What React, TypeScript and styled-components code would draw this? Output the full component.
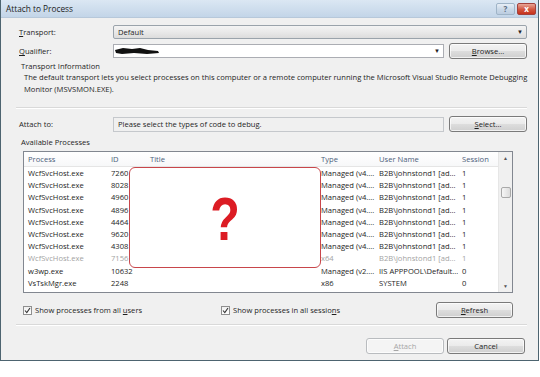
import React from "react";
import styled, { createGlobalStyle } from "styled-components";

const GlobalStyle = createGlobalStyle`
  html, body {
    margin: 0;
    padding: 0;
    background: #ffffff;
  }
  body {
    font-family: "Open Sans", "Noto Sans", sans-serif;
    font-size: 7.6px;
    color: #1e1e1e;
  }
`;

const Dialog = styled.div`
  width: 537px;
  height: 360px;
  background: #f0f0f0;
  border: 1px solid #4d6470;
  border-top: none;
  display: flex;
  flex-direction: column;
  box-sizing: content-box;
`;

const TitleBar = styled.div`
  height: 17px;
  display: flex;
  align-items: center;
  justify-content: space-between;
  padding: 0 2px 0 5px;
  background: linear-gradient(#dbe7f3, #c3d5e8);
  border-bottom: 1px solid #b7c8da;
  font-size: 8.3px;
  color: #1b1b1b;
`;

const Controls = styled.div`
  display: flex;
  gap: 2px;
  align-items: center;
`;

const CaptionButton = styled.div<{ $close?: boolean }>`
  width: 19px;
  height: 12px;
  border-radius: 2px;
  border: 1px solid ${(p) => (p.$close ? "#a3413c" : "#9fb4c7")};
  background: ${(p) =>
    p.$close
      ? "linear-gradient(#e8a597, #d2553f 55%, #c7321c)"
      : "linear-gradient(#e7eef6, #c9d8e7 55%, #bccde0)"};
  color: ${(p) => (p.$close ? "#fff" : "#5b6c80")};
  font-size: 8px;
  font-weight: bold;
  display: flex;
  align-items: center;
  justify-content: center;
  box-sizing: border-box;
`;

const Body = styled.div`
  flex: 1;
  display: flex;
  flex-direction: column;
  padding: 6px 11px 0 18px;
`;

const FieldRow = styled.div<{ $mt?: number }>`
  display: grid;
  grid-template-columns: 89px 1fr 78px;
  column-gap: 5px;
  align-items: center;
  margin-top: ${(p) => p.$mt ?? 0}px;
  height: 15px;
`;

const Label = styled.span`
  white-space: nowrap;
`;

const Select = styled.div<{ $span?: boolean }>`
  grid-column: ${(p) => (p.$span ? "2 / 4" : "2 / 3")};
  height: 14px;
  border: 1px solid #9aa3ab;
  border-radius: 2px;
  background: linear-gradient(#f4f4f4, #e9e9e9 50%, #dcdcdc);
  display: flex;
  align-items: center;
  justify-content: space-between;
  padding: 0 3px 0 4px;
  box-sizing: border-box;
`;

const Combo = styled.div`
  height: 14px;
  border: 1px solid #abadb3;
  background: #ffffff;
  display: flex;
  align-items: center;
  justify-content: space-between;
  padding: 0 3px 0 0;
  box-sizing: border-box;
`;

const TextField = styled.div`
  height: 15px;
  border: 1px solid #c5c8cc;
  background: #f0f0f0;
  display: flex;
  align-items: center;
  padding: 0 4px;
  box-sizing: border-box;
`;

const Arrow = styled.span`
  font-size: 6px;
  color: #222;
`;

const Button = styled.div<{ $disabled?: boolean; $w?: number }>`
  width: ${(p) => p.$w ?? 78}px;
  height: 16px;
  border: 1px solid ${(p) => (p.$disabled ? "#b9bcbf" : "#7a7a7a")};
  border-radius: 3px;
  background: ${(p) =>
    p.$disabled
      ? "#f4f4f4"
      : "linear-gradient(#f3f3f3, #ebebeb 48%, #dddddd 52%, #cfcfcf)"};
  color: ${(p) => (p.$disabled ? "#a6a6a6" : "#1e1e1e")};
  display: flex;
  align-items: center;
  justify-content: center;
  box-sizing: border-box;
  box-shadow: inset 0 0 0 1px rgba(255, 255, 255, 0.7);
`;

const U = styled.span`
  text-decoration: underline;
`;

const Group = styled.div`
  margin-top: 3px;
  padding-left: 2px;
  display: flex;
  flex-direction: column;
`;

const GroupText = styled.div`
  padding-left: 3px;
  line-height: 12px;
  white-space: nowrap;
`;

const Separator = styled.div<{ $mt: number }>`
  height: 0;
  border-top: 1px solid #d9d9d9;
  border-bottom: 1px solid #ffffff;
  margin-top: ${(p) => p.$mt}px;
  margin-left: -3px;
`;

const SectionLabel = styled.div`
  margin-top: 5px;
  padding-left: 2px;
  line-height: 12px;
`;

const ListBox = styled.div`
  position: relative;
  margin: 3px 14px 0 4px;
  height: 142px;
  border: 1px solid #828790;
  background: #ffffff;
  display: flex;
  overflow: hidden;
  box-sizing: border-box;
`;

const Table = styled.div`
  flex: 1;
  display: flex;
  flex-direction: column;
`;

const COLS = "83px 39px 171px 58px 83px 1fr";

const HeaderRow = styled.div`
  flex-shrink: 0;
  display: grid;
  grid-template-columns: ${COLS};
  height: 14px;
  align-items: center;
  background: linear-gradient(#ffffff, #f7f8f9);
  border-bottom: 1px solid #e5e5e5;
  color: #4c607a;
`;

const Row = styled.div<{ $dim?: boolean }>`
  flex-shrink: 0;
  display: grid;
  grid-template-columns: ${COLS};
  height: 12.2px;
  align-items: center;
  color: ${(p) => (p.$dim ? "#a3a3a3" : "#1e1e1e")};
`;

const Cell = styled.span`
  padding-left: 4px;
  white-space: nowrap;
  overflow: hidden;
`;

const ScrollBar = styled.div`
  width: 13px;
  background: #f0f0f0;
  border-left: 1px solid #e6e6e6;
  display: flex;
  flex-direction: column;
  align-items: center;
`;

const ScrollArrow = styled.span`
  font-size: 5px;
  color: #555;
  height: 12px;
  display: flex;
  align-items: center;
`;

const Track = styled.div`
  flex: 1;
  padding-top: 23px;
`;

const Thumb = styled.div`
  width: 10px;
  height: 11px;
  border: 1px solid #a9a9a9;
  border-radius: 2px;
  background: linear-gradient(90deg, #f6f6f6, #dcdcdc);
  box-sizing: border-box;
`;

const Overlay = styled.div`
  position: absolute;
  left: 105px;
  top: 15px;
  width: 192px;
  height: 101px;
  border: 1.5px solid #c8464b;
  border-radius: 6px;
  background: #ffffff;
  display: flex;
  align-items: center;
  justify-content: center;
  box-sizing: border-box;
`;

const Question = styled.span`
  font-family: "Liberation Sans", Arial, sans-serif;
  font-weight: bold;
  font-size: 62px;
  color: #dc1c24;
  transform: scaleX(0.78);
  line-height: 1;
  margin-top: 2px;
`;

const OptionsRow = styled.div`
  display: flex;
  align-items: center;
  margin: 9px 14px 0 4px;
  height: 16px;
`;

const Check = styled.label<{ $w?: number }>`
  display: flex;
  align-items: center;
  gap: 3px;
  width: ${(p) => p.$w ?? 198}px;
`;

const Box = styled.span`
  width: 9px;
  height: 9px;
  border: 1px solid #8f8f8f;
  background: linear-gradient(#f0f0f0, #ffffff);
  box-sizing: border-box;
  display: flex;
  align-items: center;
  justify-content: center;
`;

const Spacer = styled.div`
  flex: 1;
`;

const Footer = styled.div`
  display: flex;
  justify-content: flex-end;
  gap: 3px;
  margin-top: 12px;
  margin-right: 2px;
`;

const Redacted = () => (
  <svg width="46" height="8" viewBox="0 0 46 8">
    <path
      d="M1 3 L9 1 L18 2 L26 1 L34 3 L44 4 L45 6 L33 7 L20 6 L8 7 L2 6 Z"
      fill="#111"
    />
  </svg>
);

const CheckMark = () => (
  <svg width="7" height="7" viewBox="0 0 7 7">
    <path d="M1 3.5 L2.8 5.5 L6 1" stroke="#333" strokeWidth="1.1" fill="none" />
  </svg>
);

const processes = [
  ["WcfSvcHost.exe", "7260", "Managed (v4....", "B2B\\johnstond1 [ad...", "1"],
  ["WcfSvcHost.exe", "8028", "Managed (v4....", "B2B\\johnstond1 [ad...", "1"],
  ["WcfSvcHost.exe", "4960", "Managed (v4....", "B2B\\johnstond1 [ad...", "1"],
  ["WcfSvcHost.exe", "4896", "Managed (v4....", "B2B\\johnstond1 [ad...", "1"],
  ["WcfSvcHost.exe", "4464", "Managed (v4....", "B2B\\johnstond1 [ad...", "1"],
  ["WcfSvcHost.exe", "9620", "Managed (v4....", "B2B\\johnstond1 [ad...", "1"],
  ["WcfSvcHost.exe", "4308", "Managed (v4....", "B2B\\johnstond1 [ad...", "1"],
  ["WcfSvcHost.exe", "7156", "x64", "B2B\\johnstond1 [ad...", "1"],
  ["w3wp.exe", "10632", "Managed (v2....", "IIS APPPOOL\\Default...", "0"],
  ["VsTskMgr.exe", "2248", "x86", "SYSTEM", "0"],
  ["VSSPHost5.exe", "2184", "x86", "B2B\\johnstond1 [ad...", "1"],
];

const App = () => {
  return (
    <>
      <GlobalStyle />
      <Dialog>
        <TitleBar>
          <span>Attach to Process</span>
          <Controls>
            <CaptionButton>?</CaptionButton>
            <CaptionButton $close>x</CaptionButton>
          </Controls>
        </TitleBar>
        <Body>
          <FieldRow>
            <Label>
              <U>T</U>ransport:
            </Label>
            <Select $span>
              <span>Default</span>
              <Arrow>▼</Arrow>
            </Select>
          </FieldRow>
          <FieldRow $mt={4}>
            <Label>
              <U>Q</U>ualifier:
            </Label>
            <Combo>
              <Redacted />
              <Arrow>▼</Arrow>
            </Combo>
            <Button>
              <U>B</U>rowse...
            </Button>
          </FieldRow>
          <Group>
            <div>Transport Information</div>
            <GroupText>
              The default transport lets you select processes on this computer or a
              remote computer running the Microsoft Visual Studio Remote Debugging
              <br />
              Monitor (MSVSMON.EXE).
            </GroupText>
          </Group>
          <Separator $mt={12} />
          <FieldRow $mt={7}>
            <Label>Attach to:</Label>
            <TextField>Please select the types of code to debug.</TextField>
            <Button>
              <U>S</U>elect...
            </Button>
          </FieldRow>
          <SectionLabel>Available Processes</SectionLabel>
          <ListBox>
            <Table>
              <HeaderRow>
                <Cell>Process</Cell>
                <Cell>ID</Cell>
                <Cell>Title</Cell>
                <Cell>Type</Cell>
                <Cell>User Name</Cell>
                <Cell>Session</Cell>
              </HeaderRow>
              {processes.map(([name, id, type, user, session], i) => (
                <Row key={i} $dim={id === "7156"}>
                  <Cell>{name}</Cell>
                  <Cell>{id}</Cell>
                  <Cell></Cell>
                  <Cell>{type}</Cell>
                  <Cell>{user}</Cell>
                  <Cell>{session}</Cell>
                </Row>
              ))}
            </Table>
            <ScrollBar>
              <ScrollArrow>▲</ScrollArrow>
              <Track>
                <Thumb />
              </Track>
              <ScrollArrow>▼</ScrollArrow>
            </ScrollBar>
            <Overlay>
              <Question>?</Question>
            </Overlay>
          </ListBox>
          <OptionsRow>
            <Check>
              <Box>
                <CheckMark />
              </Box>
              <span>
                Show processes from all <U>u</U>sers
              </span>
            </Check>
            <Check $w={160}>
              <Box>
                <CheckMark />
              </Box>
              <span>
                Show processes in all sessio<U>n</U>s
              </span>
            </Check>
            <Spacer />
            <Button $w={77}>
              <U>R</U>efresh
            </Button>
          </OptionsRow>
          <Separator $mt={6} />
          <Footer>
            <Button $disabled>
              <U>A</U>ttach
            </Button>
            <Button>Cancel</Button>
          </Footer>
        </Body>
      </Dialog>
    </>
  );
};

export default App;
